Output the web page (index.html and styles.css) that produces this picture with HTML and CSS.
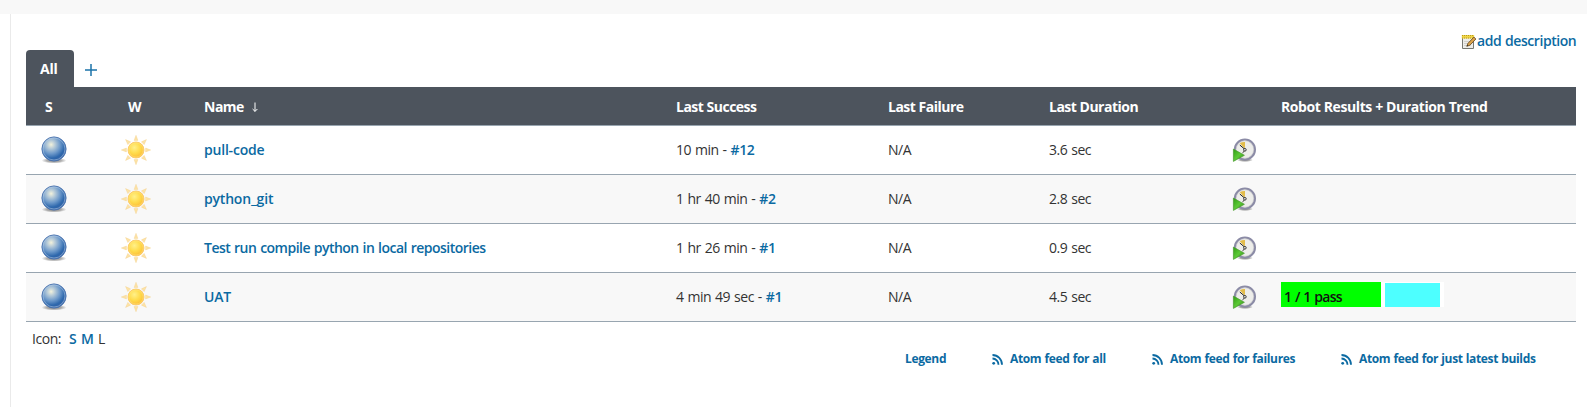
FILE: index.html
```html
<!DOCTYPE html>
<html lang="en">
<head>
<meta charset="utf-8">
<title>All</title>
<link rel="stylesheet" href="styles.css">
</head>
<body>
<svg class="defs" width="0" height="0" aria-hidden="true">
  <defs>
    <radialGradient id="ballFill" cx=".38" cy=".32" r=".68">
      <stop offset="0" stop-color="#f3f2dc"/><stop offset=".25" stop-color="#b4c9d8"/><stop offset=".55" stop-color="#6d99ca"/><stop offset=".82" stop-color="#2e68ad"/><stop offset="1" stop-color="#3262a6"/>
    </radialGradient>
    <radialGradient id="shadowFill"><stop offset="0" stop-color="#000" stop-opacity=".5"/><stop offset=".6" stop-color="#000" stop-opacity=".3"/><stop offset="1" stop-color="#000" stop-opacity="0"/></radialGradient>
    <radialGradient id="sunFill" cx=".4" cy=".35" r=".7"><stop offset="0" stop-color="#fff08a"/><stop offset=".5" stop-color="#ffdc4c"/><stop offset="1" stop-color="#fcb832"/></radialGradient>
    <linearGradient id="goFill" x2="1" y2="1"><stop offset="0" stop-color="#2f9e12"/><stop offset=".5" stop-color="#5cc936"/><stop offset="1" stop-color="#2c860e"/></linearGradient>
    <symbol id="ball" viewBox="0 0 28 28">
      <ellipse cx="14" cy="24.5" rx="12.5" ry="3" fill="url(#shadowFill)"/>
      <circle cx="14" cy="13" r="12.1" fill="url(#ballFill)" stroke="#4a72ae" stroke-width=".9"/>
      <circle cx="14" cy="13" r="11" fill="none" stroke="#b7cee8" stroke-width=".8" opacity=".65"/>
    </symbol>
    <symbol id="sun" viewBox="-15 -15 30 30">
      <g fill="#fde3a6" stroke="#f3cf8b" stroke-width=".4">
        <path id="ray" d="M-1.9-9.6 0-14.7 1.9-9.6Z"/>
        <use href="#ray" transform="rotate(45)"/><use href="#ray" transform="rotate(90)"/><use href="#ray" transform="rotate(135)"/><use href="#ray" transform="rotate(180)"/><use href="#ray" transform="rotate(225)"/><use href="#ray" transform="rotate(270)"/><use href="#ray" transform="rotate(315)"/>
      </g>
      <circle r="8" fill="url(#sunFill)" stroke="#fbc766" stroke-width=".9"/>
      <circle r="7.1" fill="none" stroke="#ffe78b" stroke-width=".7" opacity=".7"/>
    </symbol>
    <symbol id="clock" viewBox="0 0 24 24">
      <ellipse cx="13" cy="22" rx="8" ry="2" fill="url(#shadowFill)"/>
      <circle cx="12.9" cy="11.5" r="10" fill="#ededea" stroke="#8b8ba6" stroke-width="2.2"/>
      <circle cx="12.9" cy="11.5" r="8.8" fill="none" stroke="#c9c9cb" stroke-width=".6"/>
      <path d="M12.5 10.5 7.8 5.2Q10 3.8 13 4V9Z" fill="#e3bd4b"/>
      <path d="M7.8 7 12.7 11.2M12.5 13 10.5 14.8" fill="none" stroke="#222" stroke-width="1"/>
      <circle cx="12.9" cy="11.8" r="1.3" fill="#fff" stroke="#222" stroke-width=".9"/>
      <path d="M1.4 11.1 12.4 17.3 1.4 23.4Z" fill="url(#goFill)" stroke="#4b9a30" stroke-width=".7"/>
    </symbol>
    <symbol id="feed" viewBox="0 0 11 11">
      <circle cx="1.7" cy="9.3" r="1.4" fill="#0b6aa2"/>
      <path d="M.5 4.5A6.2 6.2 0 0 1 6.5 10.7M.5 1A9.5 9.5 0 0 1 10 10.7" fill="none" stroke="#0b6aa2" stroke-width="1.8"/>
    </symbol>
  </defs>
</svg>
<div class="topbar"></div>
<main class="panel">
  <div class="description">
    <svg class="note" viewBox="0 0 16 16"><path d="M1.5 2.5h11v12h-11z" fill="#eeeeea" stroke="#777872"/><path d="M3 7.5h7M3 9.5h6M3 11.5h7" stroke="#d2d2d0"/><path d="M.8 1h12.4v3.5H.8z" fill="#efd548"/><path d="M1 1.5h12M1 4h12" stroke="#b99a1c" stroke-dasharray="1 1"/><path d="M5.8 12.3 7 9.3l5.9-6.2 2 1.9-6 6.2Z" fill="#dca44b" stroke="#62431e" stroke-width=".8"/><path d="m5.8 12.3.4-1.4 1 .9Z" fill="#222"/></svg><a class="add">add description</a>
  </div>
  <nav class="tabs">
    <a class="tab">All</a>
    <svg class="plus" viewBox="0 0 12 12"><path d="M0 6h12M6 0v12" stroke="#1b73a9" stroke-width="1.5"/></svg>
  </nav>
  <div class="table">
    <div class="row head"><span class="s">S</span><span class="w">W</span><span>Name<svg class="sort" viewBox="0 0 6 10"><path d="M3 .5v8.7M.6 7 3 9.4 5.4 7" fill="none" stroke="#fff"/></svg></span><span>Last Success</span><span>Last Failure</span><span>Last Duration</span><span></span><span class="robot">Robot Results + Duration Trend</span></div>
    <div class="row"><span><svg class="ball"><use href="#ball"/></svg></span><span><svg class="sun"><use href="#sun"/></svg></span><a class="job">pull-code</a><span>10 min - <a>#12</a></span><span>N/A</span><span>3.6 sec</span><span><svg class="clock"><use href="#clock"/></svg></span><span></span></div>
    <div class="row alt"><span><svg class="ball"><use href="#ball"/></svg></span><span><svg class="sun"><use href="#sun"/></svg></span><a class="job">python_git</a><span>1 hr 40 min - <a>#2</a></span><span>N/A</span><span>2.8 sec</span><span><svg class="clock"><use href="#clock"/></svg></span><span></span></div>
    <div class="row"><span><svg class="ball"><use href="#ball"/></svg></span><span><svg class="sun"><use href="#sun"/></svg></span><a class="job long">Test run compile python in local repositories</a><span>1 hr 26 min - <a>#1</a></span><span>N/A</span><span>0.9 sec</span><span><svg class="clock"><use href="#clock"/></svg></span><span></span></div>
    <div class="row alt"><span><svg class="ball"><use href="#ball"/></svg></span><span><svg class="sun"><use href="#sun"/></svg></span><a class="job">UAT</a><span>4 min 49 sec - <a>#1</a></span><span>N/A</span><span>4.5 sec</span><span><svg class="clock"><use href="#clock"/></svg></span><span class="results"><b class="pass">1 / 1 pass</b><i class="trend"></i></span></div>
  </div>
  <div class="sizes"><span class="label">Icon:</span><a>S</a><a class="m">M</a><span>L</span></div>
  <footer class="feeds">
    <a class="legend">Legend</a>
    <a class="all"><svg class="feed"><use href="#feed"/></svg>Atom feed for all</a>
    <a class="failures"><svg class="feed"><use href="#feed"/></svg>Atom feed for failures</a>
    <a class="latest"><svg class="feed"><use href="#feed"/></svg>Atom feed for just latest builds</a>
  </footer>
</main>
</body>
</html>
```
FILE: styles.css
```css
* { box-sizing: border-box; }
body { margin: 0; height: 407px; overflow: hidden; background: #fff; color: #333; font: 14px/20px "Open Sans", "Noto Sans", sans-serif; letter-spacing: -.45px; word-spacing: .7px; white-space: nowrap; }
svg { display: block; flex: none; }
.defs { position: absolute; }
a { color: #0b6aa2; font-weight: 600; }
.topbar { height: 14px; background: #f8f8f8; }
.panel { height: 393px; margin-left: 10px; padding: 16px 11px 0 15px; border-left: 1px solid #eaeaea; }
.description { display: flex; justify-content: flex-end; height: 20px; }
.note { width: 16px; height: 16px; margin-top: 4px; }
.add { width: 99px; padding-top: 1px; letter-spacing: -.45px; }
.tabs { display: flex; align-items: flex-start; height: 37px; }
.tab { width: 48px; height: 37px; padding: 9px 0 0 14px; border-radius: 4px 4px 0 0; background: #4d545d; color: #fff; font-weight: 700; letter-spacing: -.2px; }
.plus { width: 12px; height: 12px; margin: 14px 0 0 11px; }
.row { display: grid; grid-template-columns: 94px 84px 472px 212px 161px 183px 49px 295px; align-items: center; height: 49px; border-bottom: 1px solid #98a5b0; }
.head { height: 39px; padding-top: 2px; background: #4d545d; color: #fff; font-weight: 700; letter-spacing: -.5px; word-spacing: 0; }
.robot { letter-spacing: -.4px; }
.alt { background: #f8f8f8; }
.job { letter-spacing: -.2px; }
.long { letter-spacing: -.52px; }
.s { padding-left: 19px; }
.w { padding-left: 8px; }
.sort { display: inline-block; width: 6px; height: 10px; margin-left: 8px; }
.ball { width: 28px; height: 28px; margin-left: 14px; }
.sun { width: 30px; height: 30px; margin-left: 1px; }
.clock { width: 24px; height: 24px; margin-left: 0; }
.results { display: flex; align-self: start; padding-top: 9px; }
.pass { width: 100px; height: 25px; padding: 5px 0 0 3px; background: #0f0; color: #111; font-weight: 600; letter-spacing: -.7px; }
.trend { width: 63px; height: 25px; border: solid #fff; border-width: 1px 4px 0; background: #4dffff; }
.sizes { display: flex; height: 20px; margin-top: 7px; padding-left: 6px; }
.label { width: 37px; }
.sizes a { width: 12px; font-weight: 600; }
.sizes .m { width: 17px; }
.feeds { display: flex; font-size: 12px; letter-spacing: -.35px; word-spacing: .4px; }
.feeds a { display: flex; align-items: center; gap: 7px; font-weight: 700; }
.feeds .legend { width: 87px; margin-left: 879px; }
.all { width: 160px; }
.failures { width: 189px; }
.feed { width: 11px; height: 11px; }
```
